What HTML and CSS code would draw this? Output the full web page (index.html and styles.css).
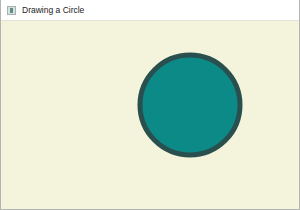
FILE: index.html
```html
<!DOCTYPE html>
<html lang="en">
<head>
    <meta charset="UTF-8">
    <title>Drawing a Circle</title>
    <link rel="stylesheet" href="styles.css">
</head>
<body>
    <div class="window">
        <div class="title-bar">
            <span class="app-icon"><span class="app-icon-inner"></span></span>
            <span class="title">Drawing a Circle</span>
        </div>
        <div class="canvas">
            <svg class="circle" width="106" height="106" viewBox="0 0 106 106">
                <circle cx="53" cy="53" r="50" fill="#0b8a87" stroke="#2a4f4f" stroke-width="5"/>
            </svg>
        </div>
    </div>
</body>
</html>
```

FILE: styles.css
```css
body {
    margin: 0;
    font-family: "Liberation Sans", Arial, sans-serif;
}

.window {
    width: 300px;
    height: 210px;
    box-sizing: border-box;
    display: flex;
    flex-direction: column;
    border: 1px solid #b4b4b4;
    border-top: none;
    background-color: #fff;
}

/* Заголовок окна */
.title-bar {
    height: 20px;
    display: flex;
    align-items: center;
    padding-left: 6px;
    background-color: #fff;
    border-bottom: 1px solid #e2e2d6;
}

.app-icon {
    width: 7px;
    height: 7px;
    border: 1px solid #a8b0b0;
    background-color: #d8e0e0;
    display: flex;
    align-items: center;
    justify-content: center;
    margin-right: 6px;
}

.app-icon-inner {
    width: 3px;
    height: 5px;
    background-color: #5e8e8a;
}

.title {
    font-size: 8.5px;
    color: #222;
}

/* Холст */
.canvas {
    flex: 1;
    background-color: #f4f4dc;
    padding: 31px 0 0 136px;
}

.circle {
    display: block;
}
```
